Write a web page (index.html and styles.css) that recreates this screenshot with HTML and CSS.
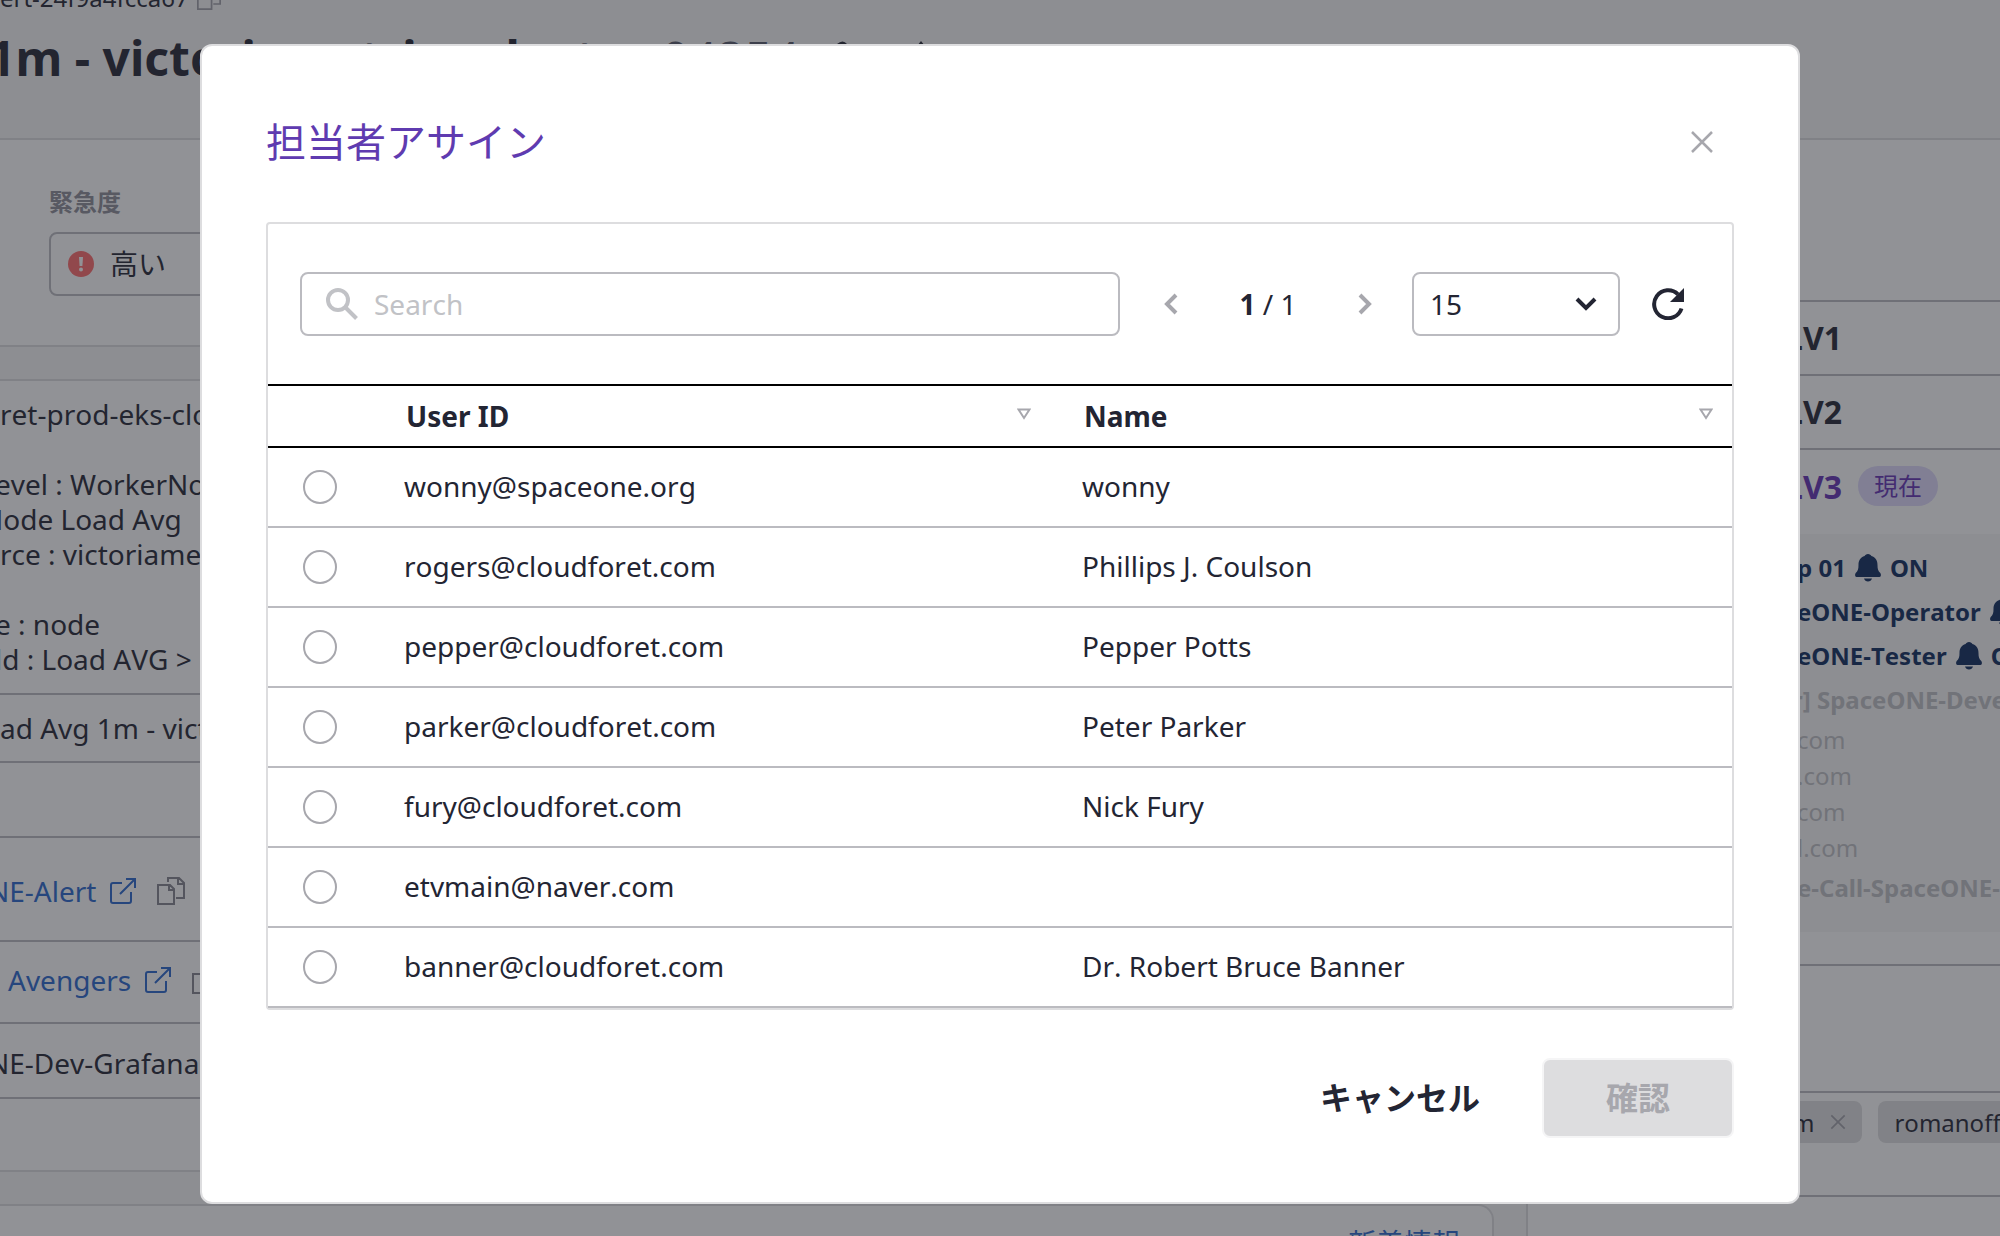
FILE: index.html
```html
<!DOCTYPE html>
<html lang="ja">
<head>
<meta charset="utf-8">
<title>担当者アサイン</title>
<link rel="stylesheet" href="styles.css">
</head>
<body>
<svg class="sprite" aria-hidden="true">
  <symbol id="copy" viewBox="0 0 28 28"><path d="M1 8h12l4 4v15H1zM12 8v5h5M11 5V1h11l5 5v15h-8M21 1v6h6" fill="none" stroke="currentColor" stroke-width="2"/></symbol>
  <symbol id="external" viewBox="0 0 26 26"><path d="M12 5H3a2 2 0 0 0-2 2v16a2 2 0 0 0 2 2h16a2 2 0 0 0 2-2v-9M16 1h9v9M25 1 10 16" fill="none" stroke="currentColor" stroke-width="2"/></symbol>
  <symbol id="bell" viewBox="0 0 26 28"><path d="M13 0c-1.800 0-2.800 1-3.400 2C5.500 3.200 3.500 6.500 3.500 11c0 4-.6 6-2.800 8C-.5 21 .2 23 1.500 23h23c1.300 0 2-2 .8-4-2.200-2-2.800-4-2.800-8 0-4.500-2-7.800-6.100-9-.6-1-1.600-2-3.400-2zM9 24.500h8c-.6 2-2 3-4 3s-3.400-1-4-3z" fill="currentColor"/></symbol>
  <symbol id="cross" viewBox="0 0 24 24"><path d="M2 2l20 20M22 2 2 22" fill="none" stroke="currentColor" stroke-width="2.500"/></symbol>
</svg>

<div class="page">
  <header class="page-header">
    <div class="alert-id"><span>ert-24f9a4fcca67</span><svg class="icon-24"><use href="#copy"/></svg></div>
    <h1 class="page-title">
      <span class="cut-long">1m - victoriametrics-cluster</span>
      <span class="number">94254</span>
      <svg class="title-icon" viewBox="0 0 36 36"><path d="M4 32v-8L22 4q6-5 10 0t0 8L12 32z" fill="currentColor"/></svg>
      <svg class="title-icon upload" viewBox="0 0 36 36"><path d="M18 1l8 10H10zM16 10h4v20h-4z" fill="currentColor"/></svg>
    </h1>
  </header>

  <div class="columns">
    <main class="main-column">
      <section class="card summary">
        <label class="field-label" for="urgency">緊急度</label>
        <div class="urgency">
          <svg class="icon-26" viewBox="0 0 26 26"><circle cx="13" cy="13" r="13" fill="#ff6a6a"/><path d="M11 6h4l-.6 9h-2.800z" fill="#fff"/><circle cx="13" cy="18.500" r="2" fill="#fff"/></svg>
          <select id="urgency"><option>高い</option></select>
        </div>
      </section>

      <section class="card details">
        <div class="description">
          <div>ret-prod-eks-clo</div>
          <div>&nbsp;</div>
          <div class="cut">evel : WorkerNo</div>
          <div class="cut-wide">Node Load Avg</div>
          <div>rce : victoriame</div>
          <div>&nbsp;</div>
          <div class="cut">e : node</div>
          <div class="cut">ld : Load AVG &gt;</div>
        </div>
        <div class="detail short"><span>ad Avg 1m - victo</span></div>
        <div class="detail"></div>
        <div class="detail tall"><a href="#alert" class="cut-long">NE-Alert <svg class="icon-26"><use href="#external"/></svg></a><svg class="icon-28"><use href="#copy"/></svg></div>
        <div class="detail medium"><a href="#avengers" class="indent">Avengers <svg class="icon-26"><use href="#external"/></svg></a><svg class="icon-28"><use href="#copy"/></svg></div>
        <div class="detail"><span class="cut-long">NE-Dev-Grafana</span></div>
        <div class="blank"></div>
      </section>

      <section class="card updates"><a href="#news">新着情報</a></section>
    </main>

    <aside class="side-column">
      <div class="level first"></div>
      <div class="level">LV1</div>
      <div class="level">LV2</div>
      <div class="level current">LV3 <span class="badge">現在</span></div>
      <ul class="members">
        <li class="on">p 01 <svg class="bell"><use href="#bell"/></svg> ON</li>
        <li class="on">eONE-Operator <svg class="bell"><use href="#bell"/></svg> ON</li>
        <li class="on">eONE-Tester <svg class="bell"><use href="#bell"/></svg> ON</li>
        <li class="off cut">r] SpaceONE-Developer</li>
        <li>com</li>
        <li>.com</li>
        <li>com</li>
        <li>l.com</li>
        <li class="off">e-Call-SpaceONE-</li>
      </ul>
      <div class="side-blank"></div>
      <div class="chips">
        <span class="chip">m <button type="button" aria-label="削除"><svg class="icon-16"><use href="#cross"/></svg></button></span>
        <span class="chip">romanoff</span>
      </div>
    </aside>
  </div>
</div>

<div class="overlay">
  <div class="modal" role="dialog" aria-labelledby="dialog-title">
    <div class="modal-header">
      <h2 id="dialog-title">担当者アサイン</h2>
      <button type="button" class="close" aria-label="閉じる"><svg class="icon-24"><use href="#cross"/></svg></button>
    </div>

    <div class="table-box">
      <div class="toolbar">
        <div class="search">
          <svg class="icon-32" viewBox="0 0 32 32"><circle cx="12" cy="12" r="10" fill="none" stroke="currentColor" stroke-width="4"/><path d="M19 19l11.500 11.500" stroke="currentColor" stroke-width="4"/></svg>
          <input type="text" placeholder="Search" aria-label="Search">
        </div>
        <div class="pager">
          <button type="button" aria-label="前へ"><svg class="chevron" viewBox="0 0 14 22"><path d="M12 2 3 11l9 9" fill="none" stroke="currentColor" stroke-width="4"/></svg></button>
          <span><b>1</b> / 1</span>
          <button type="button" aria-label="次へ"><svg class="chevron" viewBox="0 0 14 22"><path d="M2 2l9 9-9 9" fill="none" stroke="currentColor" stroke-width="4"/></svg></button>
        </div>
        <div class="page-size">
          <select aria-label="表示件数"><option>15</option></select>
          <svg class="caret" viewBox="0 0 22 14"><path d="M2 2l9 9 9-9" fill="none" stroke="currentColor" stroke-width="4"/></svg>
        </div>
        <button type="button" class="refresh" aria-label="更新"><svg class="icon-32" viewBox="0 0 32 32"><path d="M29.500 20.500A14 14 0 1 1 26 6.300" fill="none" stroke="currentColor" stroke-width="4"/><path d="M32 0v14H18z" fill="currentColor"/></svg></button>
      </div>

      <table>
        <thead>
          <tr>
            <th class="pick"></th>
            <th class="user-id"><div class="head"><span>User ID</span><button type="button" aria-label="User ID で並べ替え"><svg class="sort" viewBox="0 0 14 12"><path d="M1.500 1.500h11L7 10z" fill="none" stroke="currentColor" stroke-width="2"/></svg></button></div></th>
            <th><div class="head"><span>Name</span><button type="button" aria-label="Name で並べ替え"><svg class="sort" viewBox="0 0 14 12"><path d="M1.500 1.500h11L7 10z" fill="none" stroke="currentColor" stroke-width="2"/></svg></button></div></th>
          </tr>
        </thead>
        <tbody>
          <tr><td class="pick"><input type="radio" name="user" id="u1"></td><td><label for="u1">wonny@spaceone.org</label></td><td>wonny</td></tr>
          <tr><td class="pick"><input type="radio" name="user" id="u2"></td><td><label for="u2">rogers@cloudforet.com</label></td><td>Phillips J. Coulson</td></tr>
          <tr><td class="pick"><input type="radio" name="user" id="u3"></td><td><label for="u3">pepper@cloudforet.com</label></td><td>Pepper Potts</td></tr>
          <tr><td class="pick"><input type="radio" name="user" id="u4"></td><td><label for="u4">parker@cloudforet.com</label></td><td>Peter Parker</td></tr>
          <tr><td class="pick"><input type="radio" name="user" id="u5"></td><td><label for="u5">fury@cloudforet.com</label></td><td>Nick Fury</td></tr>
          <tr><td class="pick"><input type="radio" name="user" id="u6"></td><td><label for="u6">etvmain@naver.com</label></td><td></td></tr>
          <tr><td class="pick"><input type="radio" name="user" id="u7"></td><td><label for="u7">banner@cloudforet.com</label></td><td>Dr. Robert Bruce Banner</td></tr>
        </tbody>
      </table>
    </div>

    <div class="modal-footer">
      <button type="button" class="cancel">キャンセル</button>
      <button type="button" class="confirm" disabled>確認</button>
    </div>
  </div>
</div>
</body>
</html>
```
FILE: styles.css
```css
* { box-sizing: border-box; }

html, body { height: 100%; }

body {
  margin: 0;
  overflow: hidden;
  background: #f7f7f7;
  color: #232533;
  font-family: "Noto Sans", "Noto Sans CJK JP", sans-serif;
  font-size: 28px;
  font-kerning: none;
}

button, input, select { font: inherit; font-kerning: inherit; color: inherit; }
button { padding: 0; border: 0; background: none; }
select { appearance: none; border: 0; outline: 0; background: none; }
svg { display: block; flex: none; }
a { color: #2967cd; text-decoration: none; }

.sprite { display: none; }
.icon-16 { width: 16px; height: 16px; }
.icon-24 { width: 24px; height: 24px; }
.icon-26 { width: 26px; height: 26px; }
.icon-28 { width: 28px; height: 28px; }
.icon-32 { width: 32px; height: 32px; }

/* Page behind the dialog, scrolled down and to the right */
.page { margin-top: -20px; }
.cut { margin-left: -5px; }
.cut-long { margin-left: -12px; }
.cut-wide { margin-left: -18px; }
.indent { margin-left: 8px; }

.page-header {
  padding-bottom: 48px;
  border-bottom: 2px solid #dddddf;
}
.alert-id {
  display: flex;
  align-items: center;
  gap: 8px;
  line-height: 36px;
  font-size: 24px;
}
.alert-id svg { color: #a0a0a8; }
.page-title {
  display: flex;
  align-items: center;
  gap: 16px;
  margin: 10px 0 0;
  font-size: 48px;
  line-height: 64px;
  white-space: nowrap;
}
.number { font-weight: 400; color: #545868; }
.title-icon { width: 36px; height: 36px; }
.upload { margin-left: 36px; }

.columns {
  display: grid;
  grid-template-columns: minmax(0, 1fr) 474px;
  column-gap: 32px;
}
.main-column { display: flex; flex-direction: column; gap: 32px; min-width: 0; }
.card {
  background: #fff;
  border: 2px solid #dddddf;
  border-left: 0;
}
.summary { padding: 44px 49px 49px; border-top: 0; }
.field-label {
  display: block;
  font-size: 24px;
  font-weight: 700;
  line-height: 36px;
  color: #8c8c96;
}
.urgency {
  display: flex;
  align-items: center;
  gap: 16px;
  width: 360px;
  height: 64px;
  margin-top: 12px;
  padding-left: 17px;
  border: 2px solid #bbbbc0;
  border-radius: 8px;
}
.urgency select { padding: 0; }

.description {
  padding: 16px 0;
  line-height: 35px;
  border-bottom: 2px solid #bbbbc0;
  white-space: nowrap;
}
.detail {
  display: flex;
  align-items: center;
  gap: 21px;
  height: 75px;
  padding-top: 4px;
  border-bottom: 2px solid #bbbbc0;
  white-space: nowrap;
}
.detail.short { height: 68px; padding-top: 0; }
.detail.tall { height: 104px; }
.detail.medium { height: 82px; padding: 0 0 4px; }
.detail a { display: flex; align-items: center; gap: 14px; }
.detail > svg { color: #84848e; }
.blank { height: 71px; }
.updates {
  padding: 16px 32px;
  border-radius: 0 16px 0 0;
  text-align: right;
}

.side-column {
  background: #fff;
  border-left: 2px solid #dddddf;
  white-space: nowrap;
  overflow: hidden;
}
.level {
  display: flex;
  align-items: center;
  gap: 16px;
  height: 74px;
  padding: 0 0 2px 257px;
  border-bottom: 2px solid #bbbbc0;
  font-size: 32px;
  font-weight: 700;
}
.level.first { height: 162px; }
.level.current { border-bottom: 0; color: #6331b5; margin-bottom: 10px; }
.badge {
  padding: 0 16px;
  border-radius: 20px;
  background: #ded9fb;
  font-size: 24px;
  font-weight: 400;
  line-height: 40px;
}
.members {
  margin: 0 0 32px;
  padding: 12px 0 22px 269px;
  background: #f7f7f7;
  list-style: none;
  font-size: 24px;
  line-height: 36px;
  color: #bfc0c4;
}
.members .on, .members .off { display: flex; align-items: center; gap: 9px; line-height: 44px; font-weight: 700; }
.members .on { color: #0d2b5d; }
.bell { width: 26px; height: 28px; }
.side-blank {
  height: 129px;
  border-top: 2px solid #bbbbc0;
  border-bottom: 2px solid #bbbbc0;
}
.chips {
  display: flex;
  gap: 16px;
  padding: 8px 0 52px 248px;
  border-bottom: 2px solid #bbbbc0;
}
.chip {
  display: flex;
  align-items: center;
  gap: 16px;
  height: 42px;
  padding: 0 16px;
  border-radius: 8px;
  background: #dfdfe0;
  font-size: 24px;
}
.chip button { color: #a0a0a8; }

/* Dialog */
.overlay {
  position: fixed;
  inset: 0;
  padding-top: 44px;
  background: rgba(35, 37, 45, 0.5);
}
.modal {
  width: 80%;
  margin: 0 auto;
  padding: 64px;
  border: 2px solid #dddddf;
  border-radius: 12px;
  background: #fff;
}
.modal-header {
  display: flex;
  align-items: center;
  justify-content: space-between;
  height: 64px;
  margin-bottom: 48px;
  padding-right: 20px;
}
.modal-header h2 {
  margin: 0;
  padding-bottom: 4px;
  font-size: 40px;
  font-weight: 400;
  color: #5f3bb0;
}
.close { color: #a7a7ad; }

.table-box { border: 2px solid #dddddf; border-radius: 4px; }
.toolbar {
  display: flex;
  align-items: center;
  padding: 48px 48px 48px 32px;
}
.search {
  display: flex;
  flex: 1;
  align-items: center;
  gap: 16px;
  height: 64px;
  padding: 0 24px;
  border: 2px solid #bbbbc0;
  border-radius: 8px;
  color: #c1c2c6;
}
.search input {
  flex: 1;
  min-width: 0;
  padding: 0;
  border: 0;
  outline: 0;
  background: none;
  color: #232533;
}
.search input::placeholder { color: #c1c2c6; opacity: 1; }
.pager {
  display: flex;
  align-items: center;
  justify-content: space-between;
  width: 208px;
  margin: 0 40px 0 44px;
}
.pager button { color: #a7a7ad; }
.chevron { width: 14px; height: 22px; }
.page-size {
  display: grid;
  align-items: center;
  width: 208px;
  height: 64px;
  border: 2px solid #bbbbc0;
  border-radius: 8px;
}
.page-size select { grid-area: 1 / 1; height: 100%; padding: 0 16px; }
.caret {
  grid-area: 1 / 1;
  justify-self: end;
  width: 22px;
  height: 14px;
  margin-right: 21px;
  pointer-events: none;
}
.refresh { margin-left: 32px; }

table {
  width: 100%;
  border-collapse: separate;
  border-spacing: 0;
  table-layout: fixed;
}
th {
  height: 64px;
  padding: 0 19px 0 34px;
  border-top: 2px solid #000;
  border-bottom: 2px solid #000;
  text-align: left;
}
td {
  height: 80px;
  padding: 0 32px 2px;
  border-bottom: 2px solid #bbbbc0;
}
.pick { width: 104px; padding: 0 0 0 35px; }
.user-id { width: 678px; }
.head { display: flex; align-items: center; justify-content: space-between; }
.head button { padding-bottom: 4px; color: #a7a7ad; }
.sort { width: 14px; height: 12px; }
input[type="radio"] {
  appearance: none;
  display: block;
  width: 34px;
  height: 34px;
  margin: 0;
  border: 2px solid #a7a7ad;
  border-radius: 50%;
}

.modal-footer {
  display: flex;
  justify-content: flex-end;
  gap: 62px;
  margin-top: 48px;
  font-size: 32px;
  font-weight: 700;
}
.cancel, .confirm { height: 80px; padding-bottom: 4px; }
.confirm {
  width: 192px;
  border: 2px solid #f5f5f6;
  border-radius: 8px;
  background: #dddddf;
  color: #a7a7ad;
}
```
